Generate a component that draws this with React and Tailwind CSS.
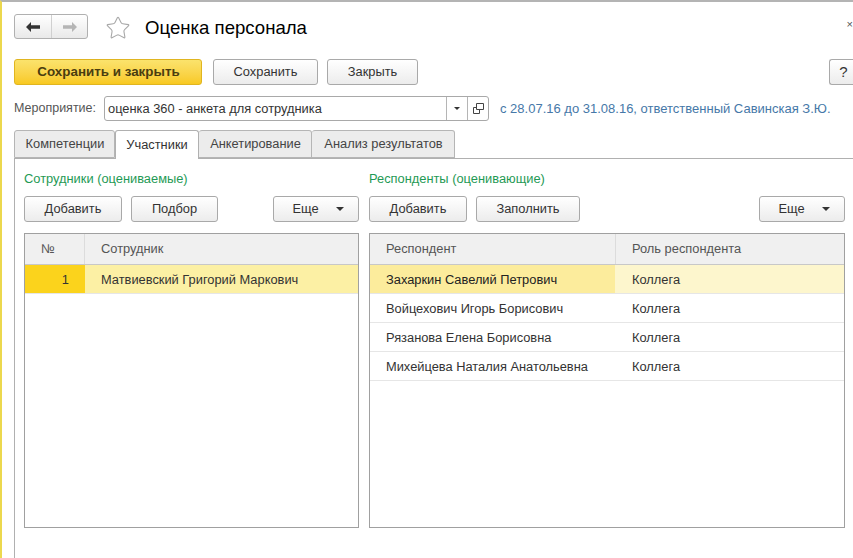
import { Star } from "lucide-react";

const btn = "flex h-[26px] items-center justify-center rounded-[3px] border border-[#a9a9a9] bg-gradient-to-b from-white to-[#ececec] text-[#333]";

function Btn({ w, children }) {
  return <div className={`${btn} ${w}`}>{children}</div>;
}

function More() {
  return (
    <div className={`${btn} w-[86px] gap-[17px] pl-1`}>
      <span>Еще</span>
      <span className="h-0 w-0 border-x-[4px] border-t-[4px] border-x-transparent border-t-[#333]" />
    </div>
  );
}

function Tab({ w, active, children }) {
  if (active) {
    return (
      <div className={`${w} relative z-10 -mb-px flex h-[29px] items-center justify-center rounded-t-[3px] border border-b-0 border-[#b0b0b0] bg-white text-[#333]`}>
        {children}
      </div>
    );
  }
  return (
    <div className={`${w} flex h-[28px] items-center justify-center rounded-t-[3px] border border-l-0 border-[#b5b5b5] bg-[#ececec] pl-px text-[#444] first:border-l`}>
      {children}
    </div>
  );
}

const respondents = [
  "Захаркин Савелий Петрович",
  "Войцехович Игорь Борисович",
  "Рязанова Елена Борисовна",
  "Михейцева Наталия Анатольевна",
];

export default function App() {
  return (
    <div className="relative h-[558px] w-[853px] overflow-hidden border-t-2 border-l-2 border-t-[#b4b4b4] border-l-[#ecd84e] bg-white pl-3 text-[12.85px] text-[#333]" style={{ fontFamily: '"Liberation Sans", Arial, sans-serif' }}>
      {/* Title row */}
      <div className="mt-3 flex h-[25px] items-center">
        <div className="flex h-[25px] w-[74px] rounded-[3px] border border-[#b0b0b0] bg-gradient-to-b from-white to-[#e9e9e9]">
          <div className="flex w-[37px] items-center justify-center border-r border-[#d0d0d0]">
            <svg width="16" height="12" viewBox="0 0 16 12"><path d="M1 6l5-5v3.2h9v3.6H6V11z" fill="#333" /></svg>
          </div>
          <div className="flex flex-1 items-center justify-center">
            <svg width="16" height="12" viewBox="0 0 16 12"><path d="M15 6l-5-5v3.2H1v3.6h9V11z" fill="#b5b5b5" /></svg>
          </div>
        </div>
        <Star className="mt-[2px] ml-[17px] h-[26px] w-[26px] text-[#a8a8a8]" strokeWidth={1} />
        <div className="mt-[3px] ml-[14px] text-[18.6px] text-black">Оценка персонала</div>
      </div>

      {/* Command bar */}
      <div className="mt-5 flex h-[26px]">
        <div className="flex h-[26px] w-[188px] items-center justify-center rounded-[3px] border border-[#e0b520] bg-gradient-to-b from-[#fbe36c] to-[#f8c91f] pl-px text-[13.4px] font-bold text-[#4a3d10]">
          Сохранить и закрыть
        </div>
        <Btn w="ml-[11px] w-[105px]">Сохранить</Btn>
        <Btn w="ml-[9px] w-[91px]">Закрыть</Btn>
        <div className={`${btn} ml-auto w-[24px] rounded-r-none border-r-0 pl-1 text-[15px]`}>?</div>
      </div>

      {/* Event field */}
      <div className="mt-[11px] flex h-[25px] items-center">
        <div className="w-[90px] text-[12.5px] text-[#555]">Мероприятие:</div>
        <div className="flex h-[25px] w-[385px] rounded-[3px] border border-[#a9a9a9]">
          <div className="flex-1 pl-[3px] leading-[23px]">оценка 360 - анкета для сотрудника</div>
          <div className="flex w-[21px] items-center justify-center border-l border-[#b5b5b5]">
            <span className="h-0 w-0 border-x-[3px] border-t-[3px] border-x-transparent border-t-[#333]" />
          </div>
          <div className="flex w-[21px] items-center justify-center border-l border-[#b5b5b5]">
            <svg width="11" height="11" viewBox="0 0 11 11" fill="none" stroke="#444"><path d="M3.5 .5h7v6h-7zM3.5 4.5h-3v6h6v-4" /></svg>
          </div>
        </div>
        <div className="ml-[11px] text-[13px] text-[#4678a8]">с 28.07.16 до 31.08.16, ответственный Савинская З.Ю.</div>
      </div>

      {/* Tabs */}
      <div className="mt-[9px] flex h-[29px] items-end border-b border-[#b0b0b0]">
        <Tab w="w-[101px]">Компетенции</Tab>
        <Tab w="w-[84px]" active>Участники</Tab>
        <Tab w="w-[113px]">Анкетирование</Tab>
        <Tab w="w-[143px]">Анализ результатов</Tab>
      </div>

      {/* Tab page */}
      <div className="flex h-[400px] gap-[10px] border-l border-[#b0b0b0] pl-[9px]">
        <div className="flex w-[335px] flex-col">
          <div className="mt-[13px] h-[14px] leading-[14px] text-[#1f9a55]">Сотрудники (оцениваемые)</div>
          <div className="mt-[10px] flex">
            <Btn w="w-[98px]">Добавить</Btn>
            <Btn w="ml-[9px] w-[87px]">Подбор</Btn>
            <div className="ml-auto"><More /></div>
          </div>
          <div className="mt-[11px] h-[295px] border border-[#a0a0a0]">
            <div className="flex h-[31px] border-b border-[#c8c8c8] bg-[#f0f0f0] text-[#555]">
              <div className="w-[60px] border-r border-[#dcdcdc] pl-[16px] leading-[29px]">№</div>
              <div className="flex-1 pl-[16px] leading-[29px]">Сотрудник</div>
            </div>
            <div className="flex h-[29px] border-b border-[#e6e6e6] bg-[#fcf0a4] leading-[29px]">
              <div className="w-[60px] bg-[#fbd31c] pr-[16px] text-right">1</div>
              <div className="flex-1 pl-[16px]">Матвиевский Григорий Маркович</div>
            </div>
          </div>
        </div>

        <div className="flex w-[476px] flex-col">
          <div className="mt-[13px] h-[14px] leading-[14px] text-[#1f9a55]">Респонденты (оценивающие)</div>
          <div className="mt-[10px] flex">
            <Btn w="w-[98px]">Добавить</Btn>
            <Btn w="ml-[9px] w-[104px]">Заполнить</Btn>
            <div className="ml-auto"><More /></div>
          </div>
          <div className="mt-[11px] h-[295px] border border-[#a0a0a0]">
            <div className="flex h-[31px] border-b border-[#c8c8c8] bg-[#f0f0f0] text-[#555]">
              <div className="w-[246px] border-r border-[#dcdcdc] pl-[16px] leading-[29px]">Респондент</div>
              <div className="flex-1 pl-[16px] leading-[29px]">Роль респондента</div>
            </div>
            <div className="flex h-[29px] border-b border-[#e6e6e6] bg-[#fdf6cd] leading-[29px]">
              <div className="w-[245px] bg-[#fcec9c] pl-[16px] text-[#222]">{respondents[0]}</div>
              <div className="flex-1 pl-[17px]">Коллега</div>
            </div>
            {respondents.slice(1).map((name) => (
              <div key={name} className="flex h-[29px] border-b border-[#e6e6e6] leading-[29px]">
                <div className="w-[245px] pl-[16px]">{name}</div>
                <div className="flex-1 pl-[17px]">Коллега</div>
              </div>
            ))}
          </div>
        </div>
      </div>

      {/* Close cross at the window edge */}
      <div className="absolute top-[17px] right-0 text-[11px] leading-none text-[#555]">×</div>
    </div>
  );
}
